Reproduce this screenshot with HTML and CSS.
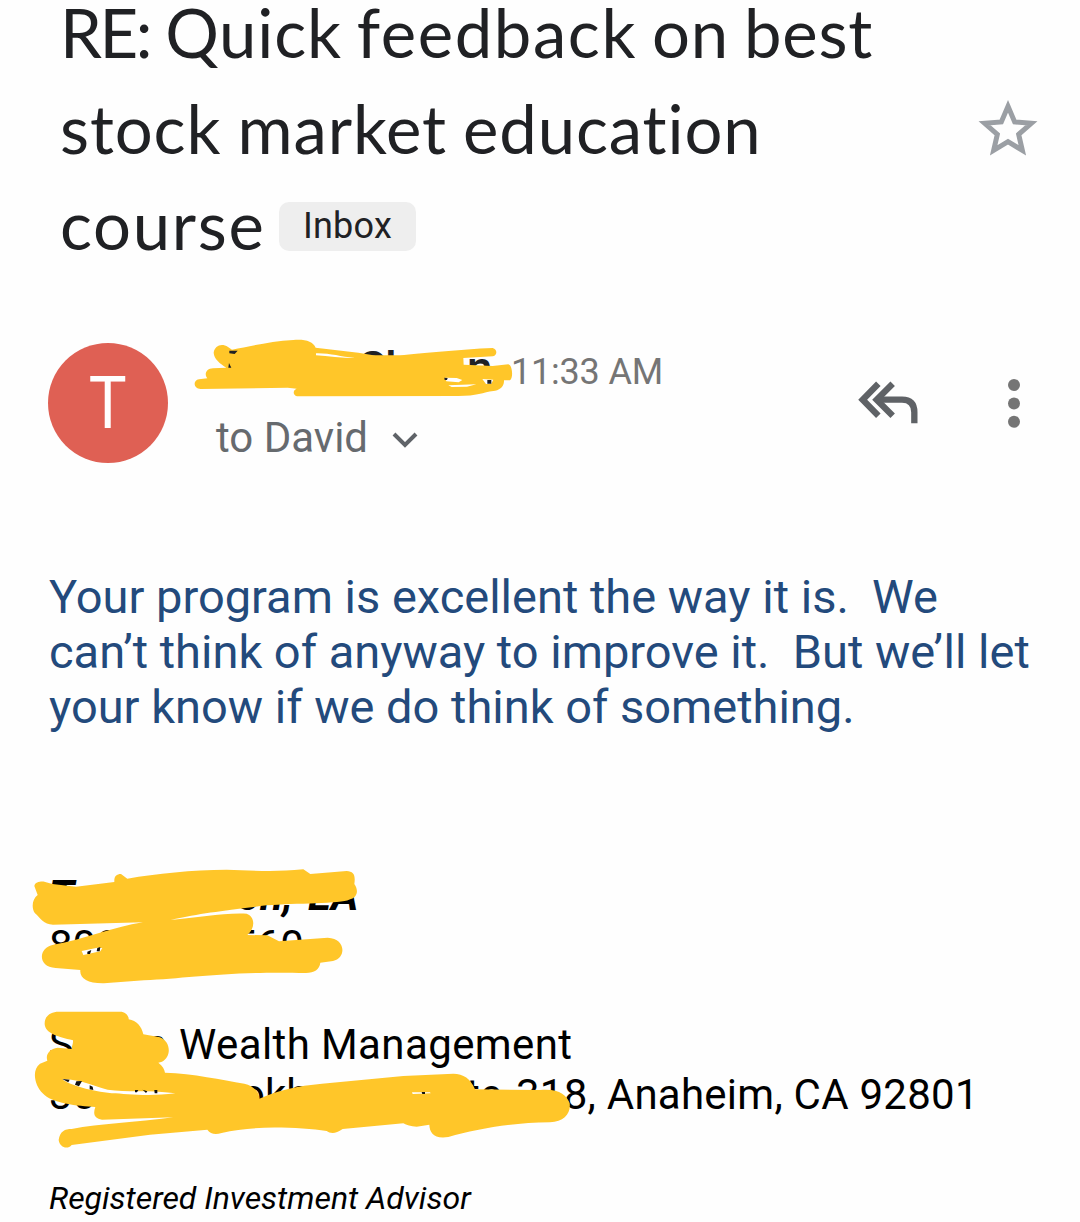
FILE: index.html
```html
<!DOCTYPE html>
<html lang="en">
<head>
<meta charset="utf-8">
<title>Mail</title>
<link rel="stylesheet" href="styles.css">
</head>
<body>
<main class="page">
  <section class="subject">
    <h1 class="title">
      <span class="title-line t1"><span class="tight">RE:</span> Quick <span class="wide">feedback</span> on best</span>
      <span class="title-line t2">stock market education</span>
      <span class="title-line t3"><span class="course">course</span><span class="label">Inbox</span></span>
    </h1>
    <svg class="star" viewBox="0 0 300 240"><path d="M144 49 164 96 214 100 176 133 187 181 144 155 101 181 112 133 74 100 124 96Z" fill="none" stroke="#9b9fa4" stroke-width="15"/></svg>
  </section>

  <header class="sender">
    <div class="avatar"><span class="initial">T</span></div>
    <div class="who">
      <div class="name-row"><span class="name"><b class="n1">T</b><b class="n2">C</b><b class="n3">l</b><b class="n4">n</b></span><time class="time">11:33 AM</time></div>
      <div class="to-row"><span class="to">to David</span><svg class="chevron" viewBox="0 0 28 18"><path d="M3 3 14 14 25 3" fill="none" stroke="#5f6368" stroke-width="4"/></svg></div>
    </div>
    <svg class="reply" viewBox="0 0 186 132"><g fill="none" stroke="#5f6266" stroke-width="19"><path d="M61 8 14 56 61 104M104 8 56 56 104 104"/><path d="M56 56H132Q169 56 169 94V127"/></g></svg>
    <svg class="more" viewBox="0 0 12 50" fill="#757575"><circle cx="6" cy="6" r="6"/><circle cx="6" cy="24.4" r="6"/><circle cx="6" cy="42.8" r="6"/></svg>
  </header>

  <section class="message">
    <p class="m1">Your program is excellent the way it is.&nbsp; We</p>
    <p class="m2">can’t think of anyway to improve it.&nbsp; But we’ll let</p>
    <p class="m3">your know if we do think of something.</p>
  </section>

  <footer class="signature">
    <p class="sig s1"><b class="f1">T</b><b class="f2">on,</b><b>EA</b></p>
    <p class="sig s2"><span class="f3">800</span><span>560</span></p>
    <p class="sig s3"><span class="f4">S</span><span class="f5">n</span><span class="company">Wealth Management</span></p>
    <p class="sig s4"><span class="f6">30</span><span class="f7">okh</span><span class="f8">te</span><span class="address">318, Anaheim, CA 92801</span></p>
    <p class="role">Registered Investment Advisor</p>
  </footer>

  <svg class="ink" viewBox="0 0 1080 1222" fill="#ffc629">
    <g transform="translate(180 330) scale(.33333)">
      <path d="M101 68C104 48 124 38 144 51L156 59C210 49 270 34 340 30C375 27 399 34 407 53L535 68 580 76 660 76C725 70 842 58 938 54C953 58 952 76 939 79L850 84 851 104 870 105 938 108 985 103C998 106 1000 145 990 151L972 151C973 172 956 181 940 183C910 187 890 198 835 198L351 199C338 196 338 180 350 176L323 173 62 177C41 177 37 151 57 148L82 145C71 132 80 115 99 115L139 113C120 101 102 87 101 68Z"/>
      <path d="M408 70C450 69 480 80 525 84C485 84 444 79 408 76ZM795 143 830 144 847 150 836 157 799 154ZM805 166 889 163 861 170 815 171ZM907 147 940 149 934 161 918 162Z" fill="#fff"/>
      <path d="M148 62H173L164 72 148 70ZM147 99 154 113H145ZM793 143 803 144 801 150 794 150ZM922 150H934V161H922Z" fill="#202124"/>
    </g>
    <g transform="translate(20 860) scale(.33333)">
      <path d="M43 78C45 66 60 64 73 65L97 72 168 80 283 66C282 49 289 42 303 42L322 56C410 40 515 30 620 29C690 31 760 37 850 28L871 42 980 33C1001 34 1007 45 1003 72C1016 90 1014 113 987 119C965 131 825 129 740 136C610 153 548 158 452 180C535 173 608 158 680 161C704 170 708 201 682 225L742 226 777 244 923 233C979 235 979 296 939 303L901 308C898 329 883 338 858 339C630 333 510 354 372 361L252 370C203 371 178 355 181 330L107 324C51 321 55 262 100 254C190 239 280 201 369 187L99 194C71 194 61 174 45 160C33 143 37 117 53 105Z"/>
      <path d="M185 273 232 263 247 264 241 274 190 285Z" fill="#fff"/>
      <path d="M202 275 214 270 210 282H202ZM232 264 241 261 239 274H230Z" fill="#111"/>
    </g>
    <g transform="translate(20 1000) scale(.33333)">
      <path d="M74 73C73 49 90 35 116 35H305C320 38 327 51 326 58C350 62 365 80 370 103L420 112C452 124 456 170 426 185L415 188C428 198 434 209 435 218C520 221 605 239 673 251C700 257 718 276 718 296C770 272 834 257 906 251L1150 228 1300 221C1330 222 1352 235 1365 268L1560 270C1615 264 1640 285 1649 309C1653 342 1632 365 1590 367C1470 368 1370 388 1285 411C1242 418 1229 398 1228 374L1190 380C1172 380 1160 375 1150 370L968 387C945 404 930 400 920 393C840 383 705 374 605 399C585 405 572 402 562 389L390 404 155 435C142 450 119 442 116 420C120 393 135 387 155 387C240 371 347 367 460 352L246 359C224 356 218 344 226 321C174 318 94 311 68 280C44 257 34 210 60 191L82 182C76 163 88 147 113 143L155 147C155 138 160 130 159 121C112 111 76 99 74 73Z"/>
      <path d="M127 238C178 237 230 261 263 269C320 278 380 268 466 280C382 291 320 281 275 280C215 273 151 257 127 238ZM1176 277 1230 277 1232 280 1178 282Z" fill="#fff"/>
      <path d="M127 237 149 239 145 247ZM169 244 186 243 177 259 165 254ZM209 256 218 260 220 270 209 268ZM345 270H355L351 277H345ZM368 269 382 274 378 279ZM403 270H412V280H404ZM1205 276H1215V282H1207Z" fill="#111"/>
    </g>
  </svg>
</main>
</body>
</html>
```
FILE: styles.css
```css
* { box-sizing: border-box; }
body { margin: 0; background: #fff; font-family: Roboto, "Liberation Sans", sans-serif; }
.page { position: relative; width: 1080px; height: 1222px; background: #fefefe; }
p { margin: 0; white-space: pre; }

.subject { display: flex; height: 271px; padding-left: 60px; }
.title { margin: 0; width: 918px; font: 400 67px/95.5px Lato, sans-serif; color: #202124; }
.title-line { display: block; white-space: pre; }
.t1 { height: 81px; line-height: 65px; letter-spacing: .8px; word-spacing: -3px; }
.t2 { height: 95.5px; letter-spacing: .9px; word-spacing: -2px; }
.t3 { display: flex; align-items: flex-start; }
.tight { letter-spacing: -2.4px; }
.wide { letter-spacing: 1.6px; }
.course { width: 202px; letter-spacing: 1.7px; }
.label { width: 137px; height: 49px; margin: 25px 0 0 17px; border-radius: 10px; background: #eee; text-align: center; font: 400 36px/48px Roboto, sans-serif; letter-spacing: .2px; }
.star { width: 100px; height: 80px; margin: 90px 0 0 -18px; }

.sender { display: flex; height: 193px; padding: 72px 0 0 48px; }
.avatar { width: 120px; height: 120px; border-radius: 50%; background: #df6054; color: #fff; font-size: 73px; line-height: 121px; text-align: center; }
.initial { display: inline-block; transform: scaleX(.87); }
.who { width: 643px; margin-left: 48px; color: #6b6e72; }
.name-row { display: flex; height: 60px; line-height: 58px; }
.name { display: flex; width: 295px; padding-left: 10px; font-size: 46px; line-height: 50px; color: #202124; }
.name b { font-weight: 500; }
.n1 { width: 131px; }
.n2 { width: 28px; }
.n3 { width: 82px; }
.n4 { width: 30px; }
.time { font-size: 36px; letter-spacing: -.2px; line-height: 59px; color: #757575; white-space: pre; }
.to-row { display: flex; height: 60px; font-size: 42px; line-height: 69px; color: #666a6e; }
.to { white-space: pre; }
.chevron { width: 28px; height: 18px; margin: 28px 0 0 23px; }
.reply { width: 62px; height: 44px; margin: 38px 0 0 -1px; }
.more { width: 12px; height: 50px; margin: 36px 0 0 88px; }

.message { height: 376px; padding: 105px 0 0 49px; color: #234a7c; font-size: 47px; line-height: 55px; }

.signature { color: #000; padding-left: 49px; }
.sig { display: flex; height: 50px; font-size: 42px; line-height: 50px; }
.s1 { margin-top: 31px; font-style: italic; }
.s3 { margin-top: 49px; }
.f1 { width: 188px; }
.f2 { width: 71px; }
.f3 { width: 184px; }
.f4 { width: 95px; }
.f5 { width: 35px; }
.company { letter-spacing: .4px; }
.f6 { width: 192px; }
.f7 { width: 225px; }
.f8 { width: 50px; }
.address { letter-spacing: .25px; }
.role { margin-top: 53px; font-size: 32px; line-height: 50px; font-style: italic; }
.ink { position: absolute; left: 0; top: 0; width: 1080px; height: 1222px; pointer-events: none; }
```
